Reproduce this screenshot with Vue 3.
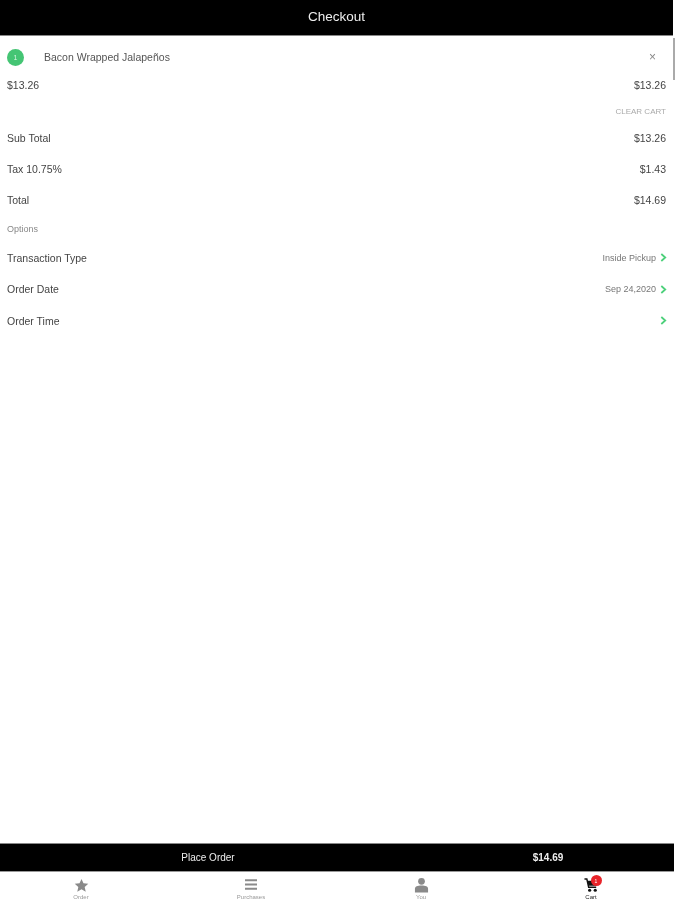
<template>
  <div class="page">
    <header class="top-bar">Checkout</header>
    <span class="scroll-thumb"></span>

    <main class="content">
      <div class="item-row">
        <span class="qty">1</span>
        <span class="item-name">Bacon Wrapped Jalapeños</span>
        <span class="remove">×</span>
      </div>
      <div class="price-row">
        <span>$13.26</span>
        <span>$13.26</span>
      </div>
      <div class="clear-row">CLEAR CART</div>

      <div v-for="row in totals" :key="row.label" class="row">
        <span>{{ row.label }}</span>
        <span>{{ row.value }}</span>
      </div>

      <div class="options-title">Options</div>

      <div v-for="opt in options" :key="opt.label" class="row option">
        <span>{{ opt.label }}</span>
        <span class="option-right">
          <span class="option-value">{{ opt.value }}</span>
          <svg class="chevron" viewBox="0 0 8 10" width="7" height="9">
            <path d="M1.5 1 L6 5 L1.5 9" fill="none" stroke="#4cd07a" stroke-width="2" />
          </svg>
        </span>
      </div>
    </main>

    <div class="place-bar">
      <span>Place Order</span>
      <span class="place-total">$14.69</span>
    </div>

    <nav class="tabs">
      <div class="tab">
        <span class="tab-icon">
          <svg viewBox="0 0 16 16" width="15" height="15">
            <path d="M8 1 L10.1 5.7 L15.2 6.2 L11.4 9.6 L12.5 14.7 L8 12.1 L3.5 14.7 L4.6 9.6 L0.8 6.2 L5.9 5.7 Z" fill="#8a8a8a" />
          </svg>
        </span>
        <span>Order</span>
      </div>
      <div class="tab">
        <span class="tab-icon">
          <svg class="lines" viewBox="0 0 14 14" width="12" height="13">
            <path d="M0 2 H14 M0 7 H14 M0 12 H14" stroke="#8a8a8a" stroke-width="2.2" fill="none" />
          </svg>
        </span>
        <span>Purchases</span>
      </div>
      <div class="tab">
        <span class="tab-icon">
          <svg viewBox="0 0 16 16" width="15" height="16">
            <circle cx="8" cy="4" r="3.6" fill="#8a8a8a" />
            <path d="M1 16 V12 C1 9.6 3.5 8.6 8 8.6 C12.5 8.6 15 9.6 15 12 V16 Z" fill="#8a8a8a" />
          </svg>
        </span>
        <span>You</span>
      </div>
      <div class="tab active">
        <span class="tab-icon cart">
          <svg viewBox="0 0 16 16" width="15" height="16">
            <path d="M0.5 1.5 H3 L5 10.5 H13" fill="none" stroke="#111" stroke-width="1.6" />
            <path d="M3.6 3.5 H15 L13.4 8.8 H4.6 Z" fill="#111" />
            <circle cx="6" cy="13.6" r="1.7" fill="#111" />
            <circle cx="12" cy="13.6" r="1.7" fill="#111" />
          </svg>
          <b class="badge">1</b>
        </span>
        <span>Cart</span>
      </div>
    </nav>
  </div>
</template>

<script setup>
const totals = [
  { label: 'Sub Total', value: '$13.26' },
  { label: 'Tax 10.75%', value: '$1.43' },
  { label: 'Total', value: '$14.69' }
]

const options = [
  { label: 'Transaction Type', value: 'Inside Pickup' },
  { label: 'Order Date', value: 'Sep 24,2020' },
  { label: 'Order Time', value: '' }
]
</script>

<style>
html, body {
  margin: 0;
  background: #fff;
}
</style>

<style scoped>
.page {
  position: relative;
  width: 675px;
  height: 900px;
  display: flex;
  flex-direction: column;
  overflow: hidden;
  font-family: "Liberation Sans", Arial, sans-serif;
  font-size: 10.5px;
  color: #444;
  background: #fff;
  filter: blur(0.5px);
}

.top-bar {
  height: 36px;
  width: 673px;
  padding-bottom: 3px;
  box-sizing: border-box;
  display: flex;
  align-items: center;
  justify-content: center;
  background: #000;
  border-bottom: 1px solid #888;
  color: #eee;
  font-size: 13.5px;
}

.scroll-thumb {
  position: absolute;
  top: 38px;
  right: 0;
  width: 2px;
  height: 42px;
  background: #aaa;
}

.content {
  flex: 1;
  padding: 0 9px 0 7px;
}

.item-row {
  height: 42px;
  display: flex;
  align-items: center;
}

.qty {
  width: 17px;
  height: 17px;
  border-radius: 50%;
  background: #45c574;
  color: #d8f5e2;
  font-size: 7px;
  display: flex;
  align-items: center;
  justify-content: center;
}

.item-name {
  margin-left: 20px;
  flex: 1;
  font-size: 10.5px;
  color: #555;
}

.remove {
  margin-right: 10px;
  font-size: 12px;
  color: #888;
}

.price-row {
  height: 14px;
  display: flex;
  align-items: center;
  justify-content: space-between;
}

.clear-row {
  height: 30px;
  padding-top: 8px;
  box-sizing: border-box;
  display: flex;
  align-items: center;
  justify-content: flex-end;
  font-size: 8px;
  color: #aaa;
}

.row {
  height: 31px;
  display: flex;
  align-items: center;
  justify-content: space-between;
}

.options-title {
  height: 27px;
  display: flex;
  align-items: center;
  font-size: 9px;
  color: #888;
}

.option {
  height: 31.5px;
}

.option-right {
  display: flex;
  align-items: center;
  gap: 4px;
  margin-right: -1px;
}

.option-value {
  font-size: 9px;
  color: #777;
}

.chevron {
  display: block;
}

.place-bar {
  height: 27px;
  width: 674px;
  display: grid;
  grid-template-columns: 416px 264px;
  align-items: center;
  justify-items: center;
  background: #000;
  border-top: 1px solid #888;
  border-bottom: 1px solid #999;
  color: #eee;
  font-size: 10px;
}

.place-total {
  font-weight: bold;
}

.tabs {
  height: 28px;
  margin-left: -4px;
  display: grid;
  grid-template-columns: repeat(4, 170px);
  color: #999;
  font-size: 6px;
}

.tab {
  display: flex;
  flex-direction: column;
  align-items: center;
  padding-top: 5px;
}

.tab-icon {
  height: 16px;
  margin-bottom: 1px;
  display: flex;
  align-items: center;
  justify-content: center;
}

.tab svg {
  display: block;
}

.tab svg.lines {
  margin-top: -2px;
}

.tab.active {
  color: #222;
}

.cart {
  position: relative;
}

.badge {
  position: absolute;
  top: -2px;
  right: -3px;
  width: 11px;
  height: 11px;
  border-radius: 50%;
  background: #e8242a;
  color: #fff;
  font-size: 5px;
  font-weight: normal;
  display: flex;
  align-items: center;
  justify-content: center;
}
</style>
